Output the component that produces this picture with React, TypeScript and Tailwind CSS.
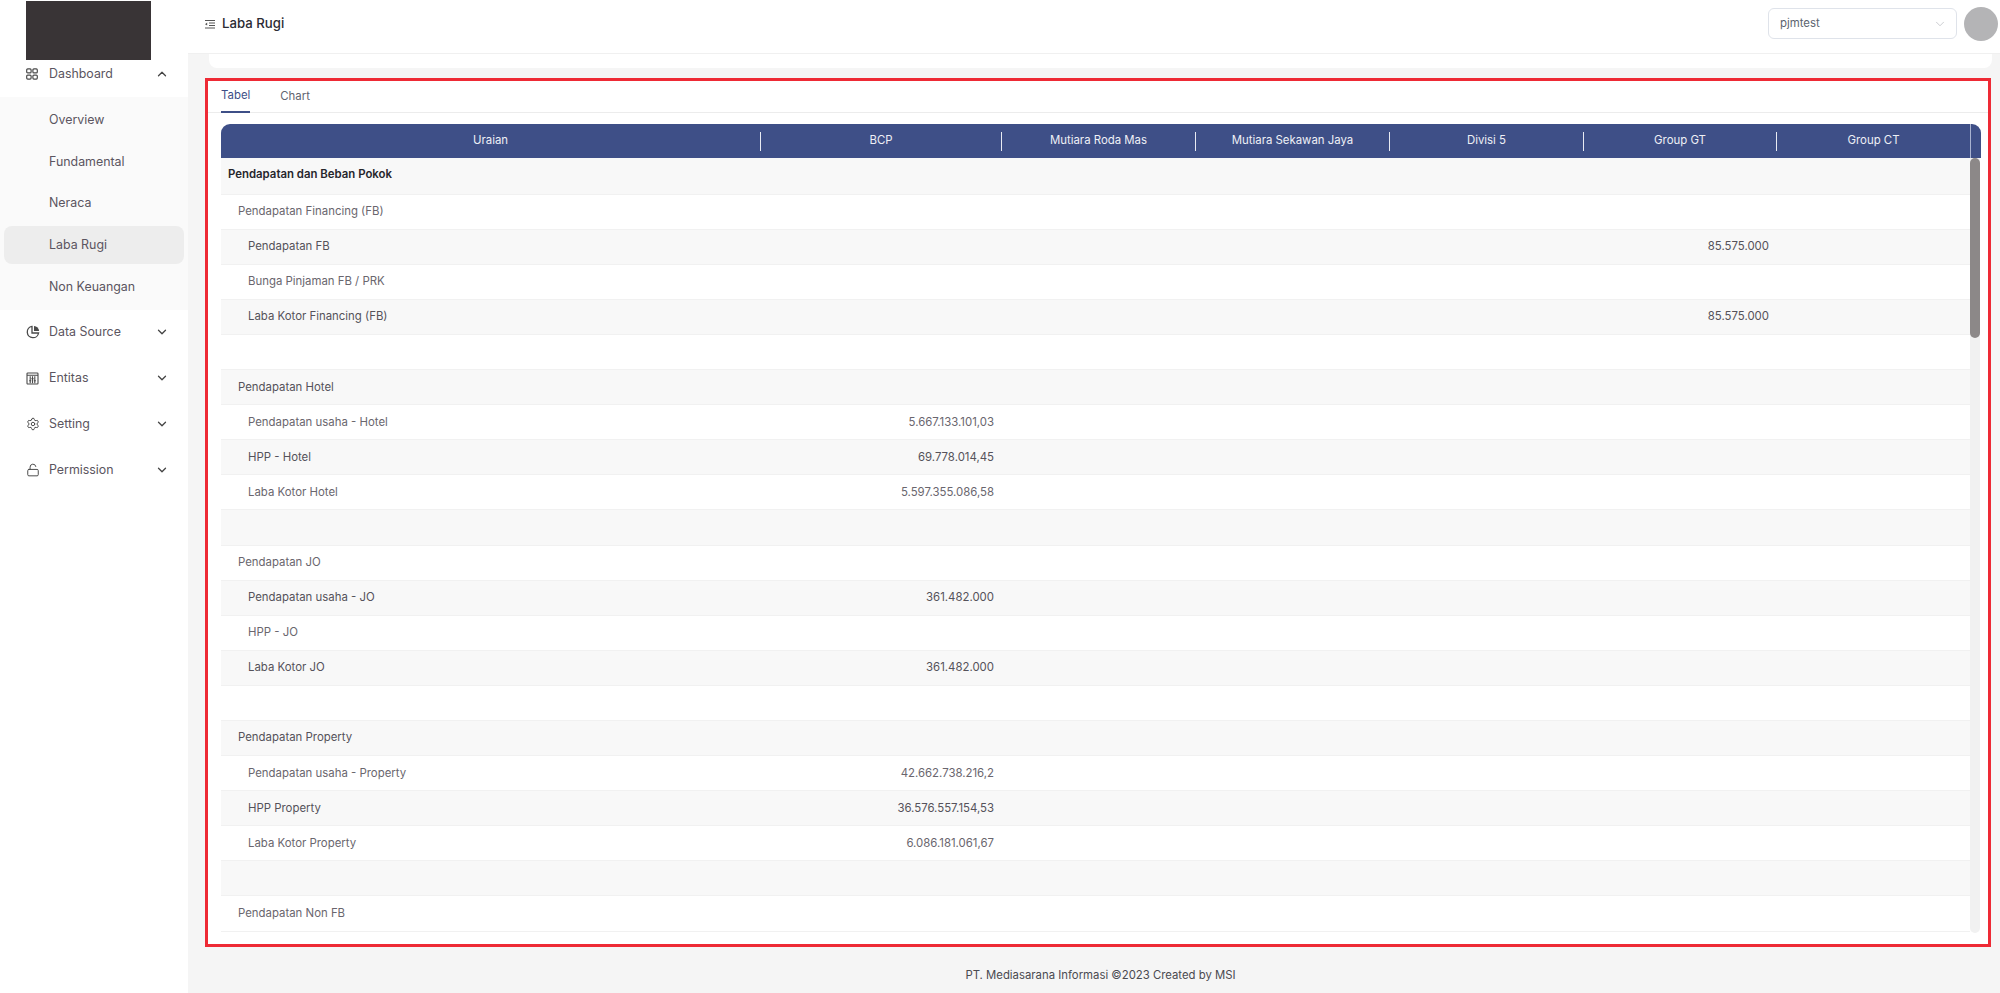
import { ChevronDown, ChevronUp, LockOpen, Settings } from "lucide-react";

const font = "font-['Inter','Noto_Sans',sans-serif]";

type Row = { label: string; level: 0 | 1 | 2; bcp?: string; gt?: string; bold?: boolean };

const rows: Row[] = [
  { label: "Pendapatan dan Beban Pokok", level: 0, bold: true },
  { label: "Pendapatan Financing (FB)", level: 1 },
  { label: "Pendapatan FB", level: 2, gt: "85.575.000" },
  { label: "Bunga Pinjaman FB / PRK", level: 2 },
  { label: "Laba Kotor Financing (FB)", level: 2, gt: "85.575.000" },
  { label: "", level: 0 },
  { label: "Pendapatan Hotel", level: 1 },
  { label: "Pendapatan usaha - Hotel", level: 2, bcp: "5.667.133.101,03" },
  { label: "HPP - Hotel", level: 2, bcp: "69.778.014,45" },
  { label: "Laba Kotor Hotel", level: 2, bcp: "5.597.355.086,58" },
  { label: "", level: 0 },
  { label: "Pendapatan JO", level: 1 },
  { label: "Pendapatan usaha - JO", level: 2, bcp: "361.482.000" },
  { label: "HPP - JO", level: 2 },
  { label: "Laba Kotor JO", level: 2, bcp: "361.482.000" },
  { label: "", level: 0 },
  { label: "Pendapatan Property", level: 1 },
  { label: "Pendapatan usaha - Property", level: 2, bcp: "42.662.738.216,2" },
  { label: "HPP Property", level: 2, bcp: "36.576.557.154,53" },
  { label: "Laba Kotor Property", level: 2, bcp: "6.086.181.061,67" },
  { label: "", level: 0 },
  { label: "Pendapatan Non FB", level: 1 },
];

const heads = ["Uraian", "BCP", "Mutiara Roda Mas", "Mutiara Sekawan Jaya", "Divisi 5", "Group GT", "Group CT"];
const subItems = ["Overview", "Fundamental", "Neraca", "Laba Rugi", "Non Keuangan"];

function DashIcon() {
  return (
    <svg width="12" height="12" viewBox="0 0 12 12" fill="none" stroke="#4a4a4a" strokeWidth="1.2">
      <rect x="0.7" y="0.9" width="4.4" height="4" rx="1" />
      <rect x="6.9" y="0.9" width="4.4" height="4" rx="1" />
      <rect x="0.7" y="7.1" width="4.4" height="4" rx="1" />
      <rect x="6.9" y="7.1" width="4.4" height="4" rx="1" />
    </svg>
  );
}

function PieIcon() {
  return (
    <svg width="14" height="14" viewBox="0 0 14 14" fill="none" stroke="#4a4a4a" strokeWidth="1.3">
      <path d="M6 1.4a5.7 5.7 0 1 0 6.6 6.6H6z" />
      <path d="M8 0.9a5.2 5.2 0 0 1 5.1 5.1H8z" fill="#4a4a4a" stroke="none" />
    </svg>
  );
}

function EntitasIcon() {
  return (
    <svg width="13" height="13" viewBox="0 0 13 13" fill="none" stroke="#4a4a4a" strokeWidth="1.1">
      <rect x="1" y="1" width="11" height="11" rx="0.8" />
      <path d="M1 3.2h11M4.2 4.2v7M6.5 4.2v7M8.8 4.2v7" />
      <path d="M3.2 8.8h2M5.5 6.6h2M7.8 8.8h2" />
    </svg>
  );
}

function MenuIcon() {
  return (
    <svg width="12" height="12" viewBox="0 0 12 12" fill="none" stroke="#555" strokeWidth="1">
      <path d="M1 2.5h10M5 5h6M5 7.5h6M1 10h10" />
      <path d="M3.2 4.6L1 6.2l2.2 1.4z" fill="#555" stroke="none" />
    </svg>
  );
}

function NavItem({ icon, label }: { icon: React.ReactNode; label: string }) {
  return (
    <div className="flex h-[46px] items-center pl-[26px] pr-[19px] text-[12.4px] text-[#5b5560]">
      <span className="flex w-[23px] items-center">{icon}</span>
      <span className="flex-1">{label}</span>
      <ChevronDown size={14} strokeWidth={2.2} className="text-[#444]" />
    </div>
  );
}

function Sidebar() {
  return (
    <aside className="flex w-[188px] shrink-0 flex-col bg-white">
      <div className="ml-[26px] mt-px h-[59px] w-[125px] shrink-0 bg-[#393436]" />
      <div className="-mt-[9px] flex h-[46px] items-center pl-[26px] pr-[19px] text-[12.4px] text-[#5b5560]">
        <span className="flex w-[23px] items-center">
          <DashIcon />
        </span>
        <span className="flex-1">Dashboard</span>
        <ChevronUp size={14} strokeWidth={2.2} className="text-[#444]" />
      </div>
      <div className="flex h-[213px] flex-col bg-[#fafafa] px-1 pt-[2.5px]">
        {subItems.map((s) => (
          <div key={s} className="flex h-[41.7px] shrink-0 items-center">
            <div
              className={`flex h-[38px] w-full items-center pl-[45px] text-[12.4px] text-[#5b5560] ${
                s === "Laba Rugi" ? "rounded-lg bg-[#ededed]" : ""
              }`}
            >
              {s}
            </div>
          </div>
        ))}
      </div>
      <div className="-mt-px">
        <NavItem icon={<PieIcon />} label="Data Source" />
        <NavItem icon={<EntitasIcon />} label="Entitas" />
        <NavItem icon={<Settings size={14} strokeWidth={1.7} className="text-[#4a4a4a]" />} label="Setting" />
        <NavItem icon={<LockOpen size={14} strokeWidth={1.7} className="text-[#4a4a4a]" />} label="Permission" />
      </div>
    </aside>
  );
}

function Header() {
  return (
    <header className="flex h-[54px] shrink-0 items-center border-b border-[#f0f0f0] bg-white pb-[6px] pl-[16px] pr-[2px]">
      <MenuIcon />
      <span className="ml-[6px] flex-1 text-[13.2px] font-medium text-[#2b2b33]">Laba Rugi</span>
      <div className="flex h-[31px] w-[189px] items-center justify-between rounded-md border border-[#dfe3ea] pl-[11px] pr-[9px] text-[11.4px] text-[#5c6470]">
        <span>pjmtest</span>
        <ChevronDown size={14} strokeWidth={1.2} className="text-[#b5b8bd]" />
      </div>
      <div className="ml-[7px] h-[34px] w-[34px] rounded-full bg-[#b4b4b6]" />
    </header>
  );
}

function TableRow({ row, index }: { row: Row; index: number }) {
  const pad = row.level === 0 ? "pl-[7px]" : row.level === 1 ? "pl-[17px]" : "pl-[27px]";
  const tone = row.bold ? "font-semibold text-[#26262c]" : index % 2 === 0 ? "text-[#55525a]" : "text-[#6a666e]";
  const height = index === 0 ? "h-[36.6px] pb-[2px]" : "h-[35.1px]";
  return (
    <div
      className={`grid ${height} grid-cols-[540px_241px_194px_194px_194px_193px_193px] items-center border-b border-[#f1f1f1] text-[11.4px] ${
        index % 2 === 0 ? "bg-[#f8f8f8]" : "bg-white"
      } ${tone}`}
    >
      <div className={pad}>{row.label}</div>
      <div className="pr-2 text-right">{row.bcp}</div>
      <div />
      <div />
      <div />
      <div className="pr-2 text-right">{row.gt}</div>
      <div />
    </div>
  );
}

function DataTable() {
  return (
    <div className="ml-[13px] mr-[7px] mt-[11px]">
      <div className="flex h-[34px] items-center rounded-t-[9px] bg-[#3e4f87] text-[11.4px] text-[#eef0f6]">
        <div className="grid w-[1749px] grid-cols-[540px_241px_194px_194px_194px_193px_193px] items-center">
          {heads.map((h, i) => (
            <div
              key={h}
              className={`flex h-[19px] items-center justify-center ${i < 6 ? "border-r border-[#e8eaf2]" : ""}`}
            >
              {h}
            </div>
          ))}
        </div>
        <div className="h-full w-px bg-[#a9b3d0]" />
      </div>
      <div className="flex">
        <div className="w-[1749px]">
          {rows.map((r, i) => (
            <TableRow key={i} row={r} index={i} />
          ))}
        </div>
        <div className="h-[775px] w-[10px] rounded-b-lg bg-[#f1f1f1]">
          <div className="h-[180px] rounded-lg bg-[#8c8888]" />
        </div>
      </div>
    </div>
  );
}

export default function App() {
  return (
    <div className={`flex h-[993px] w-[2000px] overflow-hidden bg-[#f5f5f5] ${font}`}>
      <Sidebar />
      <main className="flex min-w-0 flex-1 flex-col">
        <Header />
        <div className="ml-[21px] mr-[8px] h-[14px] shrink-0 rounded-b-lg bg-white" />
        <section className="ml-[17px] mr-[9px] mt-[10px] h-[869px] shrink-0 border-[3px] border-[#ee2a35] bg-white">
          <div className="flex h-[32px] gap-[30px] border-b border-[#ececec] px-[13px] text-[11.4px]">
            <div className="flex h-[32px] items-center border-b-2 border-[#3e4f87] text-[#3e4f87]">Tabel</div>
            <div className="flex h-[32px] items-center text-[#5f6470]">Chart</div>
          </div>
          <DataTable />
        </section>
        <footer className="flex flex-1 items-center justify-center pl-[13px] pt-[12px] text-[11.35px] text-[#4a4a50]">
          PT. Mediasarana Informasi ©2023 Created by MSI
        </footer>
      </main>
    </div>
  );
}
